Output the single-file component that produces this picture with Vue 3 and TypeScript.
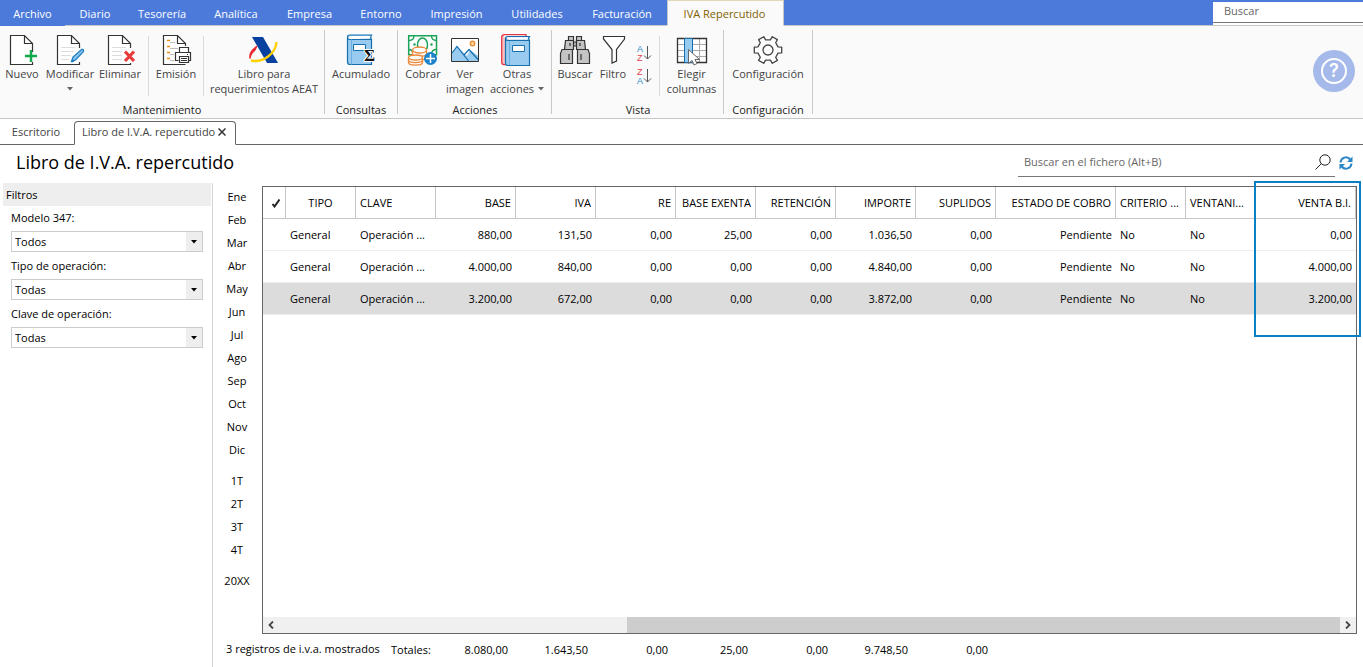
<script setup lang="ts">
import { ref } from 'vue'

interface Column {
  key: string
  label: string
  width: string
  align: 'left' | 'center' | 'right'
}

const menu = ['Archivo', 'Diario', 'Tesorería', 'Analítica', 'Empresa', 'Entorno', 'Impresión', 'Utilidades', 'Facturación', 'IVA Repercutido']
const activeMenu = ref('IVA Repercutido')

const filters = [
  { id: 'modelo', label: 'Modelo 347:', value: 'Todos' },
  { id: 'tipo', label: 'Tipo de operación:', value: 'Todas' },
  { id: 'clave', label: 'Clave de operación:', value: 'Todas' },
]

const periods = [
  ['Ene', 'Feb', 'Mar', 'Abr', 'May', 'Jun', 'Jul', 'Ago', 'Sep', 'Oct', 'Nov', 'Dic'],
  ['1T', '2T', '3T', '4T'],
  ['20XX'],
]

const columns: Column[] = [
  { key: 'tipo', label: 'TIPO', width: 'w70', align: 'center' },
  { key: 'clave', label: 'CLAVE', width: 'w80', align: 'left' },
  { key: 'base', label: 'BASE', width: 'w80', align: 'right' },
  { key: 'iva', label: 'IVA', width: 'w80', align: 'right' },
  { key: 're', label: 'RE', width: 'w80', align: 'right' },
  { key: 'exenta', label: 'BASE EXENTA', width: 'w80', align: 'right' },
  { key: 'retencion', label: 'RETENCIÓN', width: 'w80', align: 'right' },
  { key: 'importe', label: 'IMPORTE', width: 'w80', align: 'right' },
  { key: 'suplidos', label: 'SUPLIDOS', width: 'w80', align: 'right' },
  { key: 'estado', label: 'ESTADO DE COBRO', width: 'w120', align: 'right' },
  { key: 'criterio', label: 'CRITERIO ...', width: 'w70', align: 'left' },
  { key: 'ventanilla', label: 'VENTANI...', width: 'w70', align: 'left' },
  { key: 'venta', label: 'VENTA B.I.', width: 'rest', align: 'right' },
]

const rows: Record<string, string>[] = [
  { tipo: 'General', clave: 'Operación ...', base: '880,00', iva: '131,50', re: '0,00', exenta: '25,00', retencion: '0,00', importe: '1.036,50', suplidos: '0,00', estado: 'Pendiente', criterio: 'No', ventanilla: 'No', venta: '0,00' },
  { tipo: 'General', clave: 'Operación ...', base: '4.000,00', iva: '840,00', re: '0,00', exenta: '0,00', retencion: '0,00', importe: '4.840,00', suplidos: '0,00', estado: 'Pendiente', criterio: 'No', ventanilla: 'No', venta: '4.000,00' },
  { tipo: 'General', clave: 'Operación ...', base: '3.200,00', iva: '672,00', re: '0,00', exenta: '0,00', retencion: '0,00', importe: '3.872,00', suplidos: '0,00', estado: 'Pendiente', criterio: 'No', ventanilla: 'No', venta: '3.200,00' },
]
const selected = ref(2)

const totals = ['8.080,00', '1.643,50', '0,00', '25,00', '0,00', '9.748,50', '0,00']
</script>

<template>
  <div class="app">
    <header class="topbar">
      <nav class="menu">
        <button v-for="m in menu" :key="m" type="button" :class="{ active: m === activeMenu }" @click="activeMenu = m">{{ m }}</button>
      </nav>
      <div class="top-fill"></div>
      <div class="top-search"><input type="text" placeholder="Buscar" aria-label="Buscar" /></div>
    </header>

    <div class="ribbon">
      <section class="group">
        <div class="tools">
          <button type="button" class="tool w44">
            <svg viewBox="0 0 32 32"><path class="doc" d="M26.500 18V9.500L18.500 1.500H4.500V30.500H26.500V28M18.500 1.500V9.500H26" /><path d="M25 16v12M19 22h12" stroke="#12a84c" stroke-width="2.500" /></svg>
            <span>Nuevo</span>
          </button>
          <button type="button" class="tool w52">
            <svg viewBox="0 0 32 32"><path class="doc" d="M25.500 14V9.500L17.500 1.500H3.500V30.500H25.500V28M17.500 1.500V9.500H25" /><path d="M7 13.500h14M7 17.500h13M7 21.500h10M7 25.500h8" stroke="#ddd" /><path d="M17.500 27.500L19 23 27.500 15.500Q30 15 29.500 17.500L21.500 26Z" fill="#8cc4ec" stroke="#1e7fc4" stroke-width="1.300" /><path d="M17.500 27.500l2.500-1" stroke="#1e7fc4" stroke-width="2" /></svg>
            <span>Modificar</span>
            <svg class="caret" viewBox="0 0 6 4"><path d="M0 0h6L3 3.500z" fill="#666" /></svg>
          </button>
          <button type="button" class="tool w48">
            <svg viewBox="0 0 32 32"><path class="doc" d="M26.500 14V9.500L18.500 1.500H4.500V30.500H26.500V29M18.500 1.500V9.500H26" /><path d="M8 13.500h14M8 17.500h10M8 21.500h10M8 25.500h10" stroke="#ddd" /><path d="M21 17.500l9 9.500M30 17.500L21 27" stroke="#e83a3a" stroke-width="3.200" /></svg>
            <span>Eliminar</span>
          </button>
          <i class="sep spaced"></i>
          <button type="button" class="tool w54">
            <svg viewBox="0 0 32 32"><path class="doc" d="M25.500 12V9.500L17.500 1.500H3.500V30.500H25.500M17.500 1.500V9.500H25" /><path d="M7 6.500h3M7 12.500h3M7 18.500h3M7 24.500h3" stroke="#f08c0a" stroke-width="1.300" /><path d="M10 8.500h5M10 14.500h8M10 20.500h4M10 26.500h4" stroke="#bbb" /><g stroke="#333" stroke-width="1.200" fill="#fff"><path d="M19.500 19v-5.500h9V19M18.500 26.500h-3v-8h15v8h-3" /><path d="M19.500 22.500h9v6h-9zM21 24.500h6M21 26.500h6M27 20.500h1" /></g></svg>
            <span>Emisión</span>
          </button>
          <i class="sep"></i>
          <button type="button" class="tool w120">
            <svg viewBox="0 0 32 32"><path d="M9 12C3 16 1 20 2 24.500c1-4.500 3-6.500 5-8z" fill="#e8232a" stroke="#e8232a" /><path d="M4 3h11l15 26H19z" fill="#0840a0" /><path d="M28.500 8C28 19 15 29.500 3 26.500" stroke="#ffd000" stroke-width="2.400" /></svg>
            <span>Libro para</span><span>requerimientos AEAT</span>
          </button>
        </div>
        <h2>Mantenimiento</h2>
      </section>

      <section class="group">
        <div class="tools">
          <button type="button" class="tool w72">
            <svg viewBox="0 0 32 32"><path d="M2.500 3V28q0 2.500 2.500 2.500H26.500V5.500H5Q2.500 5.500 2.500 3q0-2 2.500-2H26.500L25.500 3.200l1 2.300" fill="#98cbef" stroke="#176fae" stroke-width="1.200" /><path d="M4 2h21.500l-1 2.500H5z" fill="#fff" /><path d="M6.500 5.500v25" stroke="#6aafe0" /><path d="M8.500 10.500h12v6h-12z" fill="#fff" stroke="#176fae" /><text x="19" y="27" class="sigma">Σ</text></svg>
            <span>Acumulado</span>
          </button>
        </div>
        <h2>Consultas</h2>
      </section>

      <section class="group inset">
        <div class="tools">
          <button type="button" class="tool w48">
            <svg viewBox="0 0 32 32"><path d="M1.700 1.700h27.800v19H1.700z" fill="#fff" stroke="#1ba35a" stroke-width="1.500" /><path d="M2 6.500q5 0 5-5M24.500 1.500q0 5 5 5M24.500 20.500q0-5 5-5M2 15.500q3 0 4 3" stroke="#1ba35a" stroke-width="1.400" /><ellipse cx="15.500" cy="11" rx="5" ry="7" stroke="#1ba35a" stroke-width="1.500" /><circle cx="7.500" cy="10.500" r="1.200" fill="#1ba35a" /><circle cx="24.500" cy="10.500" r="1.200" fill="#1ba35a" /><g fill="#fdfdfd" stroke="#ee8a3c" stroke-width="1.300"><path d="M5.500 16v7c0 4 14 4 14 0v-7" /><path d="M5.500 20c0 3 14 3 14 0" /><ellipse cx="12.500" cy="16" rx="7" ry="3" /><path d="M1.500 23.500v5c0 3.500 14 3.500 14 0v-5" /><path d="M1.500 26c0 3.500 14 3.500 14 0" /><ellipse cx="8.500" cy="23.500" rx="7" ry="2.500" /></g><circle cx="23.500" cy="24.500" r="6.500" fill="#1c83cb" /><path d="M23.500 20v9M19 24.500h9" stroke="#fff" stroke-width="1.500" /></svg>
            <span>Cobrar</span>
          </button>
          <button type="button" class="tool w36">
            <svg viewBox="0 0 32 32"><path d="M2.500 4.500h27v23h-27z" fill="#fff" /><path d="M3 18.500l5-6.500 10 10 3-6 8.500 6v5.500H3z" fill="#98cbef" /><path d="M3 19l5-6.500L19.500 27M14.500 21.500l5.500-6 9 10" stroke="#176fae" stroke-width="1.200" /><circle cx="23.500" cy="9.500" r="2.300" fill="#fbd09a" stroke="#ee8a2c" stroke-width="1.200" /><path d="M2.500 4.500h27v23h-27z" stroke="#333" /></svg>
            <span>Ver</span><span>imagen</span>
          </button>
          <button type="button" class="tool w68">
            <svg viewBox="0 0 32 32"><path d="M.7 3Q1 .7 3.500.7H25v30H3Q.7 30.500.7 28z" fill="#f7c1c1" stroke="#e63946" stroke-width="1.300" /><path d="M3 1.500h21v2H3z" fill="#fff" /><path d="M4.500 5V29q0 2.500 2.500 2.500H28.500V6.500H7Q4.500 6.500 4.500 4.500q0-1.700 2.500-2H28.500L27.500 4.500l1 2" fill="#98cbef" stroke="#176fae" stroke-width="1.200" /><path d="M6 3.300h21l-.5 2.200H7z" fill="#fff" /><path d="M8.500 7v24" stroke="#6aafe0" /><path d="M11.500 11.500h12v6h-12z" fill="#fff" stroke="#176fae" /></svg>
            <span>Otras</span>
            <span class="with-caret">acciones<svg class="caret" viewBox="0 0 6 4"><path d="M0 0h6L3 3.500z" fill="#666" /></svg></span>
          </button>
        </div>
        <h2>Acciones</h2>
      </section>

      <section class="group inset">
        <div class="tools">
          <button type="button" class="tool w44">
            <svg viewBox="0 0 32 32"><g fill="#c4c4c4" stroke="#333" stroke-width="1.200"><path d="M9.500 2.500h5v4h-5zM17.500 2.500h5v4h-5zM14.500 8h3v4h-3z" /><path d="M6.500 6.500h8v9h-9zM17.500 6.500h8l1 9h-9z" /><path d="M3 15.500h10.500v14h-12v-10zM18.500 15.500H29l1.500 4v10h-12z" /><path d="M11 9v3M21 9v3M10 20v6M22 20v6" /></g></svg>
            <span>Buscar</span>
          </button>
          <button type="button" class="tool w32">
            <svg viewBox="0 0 32 32"><path d="M6.500 2.500h21v2.500L19.500 15.500V27l-4.500 2V15.500L6.500 5z" fill="#fff" stroke="#333" stroke-width="1.200" /></svg>
            <span>Filtro</span>
          </button>
          <div class="sorts">
            <button type="button" aria-label="Orden ascendente"><svg viewBox="0 0 16 19"><text x="1" y="8" class="letter a">A</text><text x="1" y="17" class="letter z">Z</text><path d="M11.500 2v13M8 11.500l3.500 3.500L15 11.500" stroke="#555" /></svg></button>
            <button type="button" aria-label="Orden descendente"><svg viewBox="0 0 16 19"><text x="1" y="8" class="letter z">Z</text><text x="1" y="17" class="letter a">A</text><path d="M11.500 2v13M8 11.500l3.500 3.500L15 11.500" stroke="#555" /></svg></button>
          </div>
          <i class="sep"></i>
          <button type="button" class="tool w63">
            <svg viewBox="0 0 32 32"><path d="M1.500 4.500h29v24h-29z" fill="#fff" /><path d="M1 10.500h30M1 16.500h30M1 22.500h30M15.500 4v25M23.500 4v25" stroke="#aaa" /><path d="M1.500 4.500h29v24h-29z" stroke="#333" stroke-width="1.300" /><path d="M8.500 4.500h8v24h-8z" fill="#98cbef" stroke="#176fae" /><path d="M12.500 15.500v14l3.500-3 2 4.500 3-1.500-2-4h4.500z" fill="#fff" stroke="#666" /></svg>
            <span>Elegir</span><span>columnas</span>
          </button>
        </div>
        <h2>Vista</h2>
      </section>

      <section class="group">
        <div class="tools">
          <button type="button" class="tool w88">
            <svg viewBox="-16 -16 32 32"><path d="M10 -3.100L13.700 -2.900V2.900L10 3.100 7.700 7.200 9.400 10.400 4.300 13.300 2.400 10.200H-2.400L-4.300 13.300-9.400 10.400-7.700 7.200-10 3.100-13.700 2.900V-2.900L-10 -3.100-7.700 -7.200-9.400 -10.400-4.300 -13.300-2.400 -10.200H2.400L4.300 -13.300 9.400 -10.400 7.700 -7.200z" fill="#fff" stroke="#444" stroke-width="1.300" stroke-linejoin="round" /><circle r="5" stroke="#444" stroke-width="1.300" /></svg>
            <span>Configuración</span>
          </button>
        </div>
        <h2>Configuración</h2>
      </section>

      <button type="button" class="help" aria-label="Ayuda"><span>?</span></button>
    </div>

    <div class="tabs">
      <button type="button" class="tab">Escritorio</button>
      <div class="tab current">
        <button type="button">Libro de I.V.A. repercutido</button>
        <button type="button" class="close" aria-label="Cerrar"><svg viewBox="0 0 8 8"><path d="M.5.5l7 7M7.500.5l-7 7" stroke="#333" stroke-width="1.500" /></svg></button>
      </div>
      <div class="tabs-fill"></div>
    </div>

    <div class="titlebar">
      <h1>Libro de I.V.A. repercutido</h1>
      <div class="file-search">
        <input type="text" placeholder="Buscar en el fichero (Alt+B)" aria-label="Buscar en el fichero" />
        <svg viewBox="0 0 16 16"><circle cx="10" cy="6" r="5.200" stroke="#222" /><path d="M6.500 9.500L.5 15.500" stroke="#222" /></svg>
      </div>
      <button type="button" class="refresh" aria-label="Actualizar">
        <svg viewBox="0 0 14 14"><path d="M1.500 6.500C2 1.500 8-.5 11.300 3.500M12.500 7.500C12 12.500 6 14.500 2.700 10.500" stroke="#2a86c8" stroke-width="2" /><path d="M13.500.5V6H8zM.5 13.500V8H6z" fill="#2a86c8" /></svg>
      </button>
    </div>

    <main class="body">
      <aside class="filters">
        <h3>Filtros</h3>
        <div v-for="f in filters" :key="f.id" class="field">
          <label :for="f.id">{{ f.label }}</label>
          <div class="combo">
            <select :id="f.id"><option>{{ f.value }}</option></select>
            <span class="arrow"><svg viewBox="0 0 6 4"><path d="M0 0h6L3 3.500z" fill="#000" /></svg></span>
          </div>
        </div>
      </aside>

      <nav class="periods">
        <div v-for="(g, i) in periods" :key="i" class="period-group">
          <button v-for="p in g" :key="p" type="button">{{ p }}</button>
        </div>
      </nav>

      <section class="content">
        <div class="grid">
          <table>
            <colgroup>
              <col class="w23" />
              <col v-for="c in columns" :key="c.key" :class="c.width" />
            </colgroup>
            <thead>
              <tr>
                <th class="check"><svg viewBox="0 0 10 10"><path d="M1.500 6l2 2.500L8.500 1.500" stroke="#222" stroke-width="2" /></svg></th>
                <th v-for="c in columns" :key="c.key" :class="[c.align, { bare: c.key === 'ventanilla' }]">{{ c.label }}</th>
              </tr>
            </thead>
            <tbody>
              <tr v-for="(r, i) in rows" :key="i" :class="{ selected: i === selected }" @click="selected = i">
                <td></td>
                <td v-for="c in columns" :key="c.key" :class="c.align === 'right' ? 'right' : 'left'">{{ r[c.key] }}</td>
              </tr>
            </tbody>
          </table>
          <div class="scroll">
            <button type="button" aria-label="Desplazar a la izquierda"><svg viewBox="0 0 8 8"><path d="M6 .5L2.500 4 6 7.500" stroke="#444" stroke-width="1.800" /></svg></button>
            <div class="track"><div class="thumb"></div></div>
            <button type="button" aria-label="Desplazar a la derecha"><svg viewBox="0 0 8 8"><path d="M2 .5L5.500 4 2 7.500" stroke="#444" stroke-width="1.800" /></svg></button>
          </div>
          <div class="highlight"></div>
        </div>
        <footer class="totals">
          <span class="count">3 registros de i.v.a. mostrados</span>
          <span class="label">Totales:</span>
          <span v-for="(t, i) in totals" :key="i" class="total">{{ t }}</span>
        </footer>
      </section>
    </main>
  </div>
</template>

<style>
body {
  margin: 0;
  background: #fff;
}
</style>

<style scoped>
.app {
  display: flex;
  flex-direction: column;
  min-height: 100vh;
  overflow: hidden;
  font-family: "Open Sans", "Noto Sans", sans-serif;
  font-size: 11px;
  line-height: 15px;
  color: #000;
}
.app * { box-sizing: border-box; }
button, input, select {
  font: inherit;
  color: inherit;
  margin: 0;
  padding: 0;
  border: 0;
  background: none;
}
button { white-space: nowrap; }
h1, h2, h3 { margin: 0; font-weight: 400; }
svg { display: block; fill: none; flex: none; }

.topbar { display: flex; height: 26px; background: #4c7adb; }
.menu {
  display: grid;
  grid-template-columns: 65px 60px 74px 74px 73px 70px 81px 80px 90px 117px;
}
.menu button { color: #fff; padding-top: 2px; border-bottom: 1px solid #c6c6c6; }
.menu button:first-child { border-bottom-color: #4c7adb; }
.menu button.active {
  color: #806000;
  background: #fafafa;
  border: 1px solid #c6c6c6;
  border-top-color: #e0d8b8;
  border-bottom-color: #fafafa;
  padding: 0 2px 0 0;
}
.top-fill { flex: 1; border-bottom: 1px solid #c6c6c6; }
.top-search { width: 150px; padding-top: 2px; border-bottom: 1px solid #c6c6c6; }
.top-search input {
  display: block;
  width: 100%;
  height: 21px;
  padding: 0 11px 3px;
  background: #fff;
  border-bottom: 1px solid #777;
  box-shadow: 0 2px #fff;
}
input::placeholder { color: #666; opacity: 1; }

.ribbon {
  display: flex;
  height: 93px;
  background: #fafafa;
  border-bottom: 1px solid #c6c6c6;
  color: #444;
}
.group {
  display: flex;
  flex-direction: column;
  margin: 4px 0;
  border-right: 1px solid #c8c8c8;
}
.group.inset { padding-left: 1px; }
.tools { display: flex; flex: none; height: 72px; }
.group h2 { font-size: 11px; text-align: center; color: #222; }
.tool {
  display: flex;
  flex-direction: column;
  align-items: center;
  justify-content: flex-start;
  padding-top: 4px;
}
.tool > svg { width: 32px; height: 32px; }
.tool svg.caret, .caret { width: 6px; height: 4px; }
.tool > svg.caret { margin-top: 6px; }
.with-caret { display: flex; align-items: center; gap: 4px; }
.doc { stroke: #333; stroke-width: 1.2; fill: #fff; }
.sigma { font: bold 17px "Liberation Serif", serif; fill: #111; stroke: #fff; stroke-width: 2px; paint-order: stroke; }
.letter { font: 9px "Liberation Sans", sans-serif; }
.letter.a { fill: #2b86c6; }
.letter.z { fill: #e2424b; }
.sep { width: 1px; margin: 6px 0; background: #dadada; height: 60px; }
.sep.spaced { margin-left: 4px; }
.sorts { display: flex; flex-direction: column; width: 30px; padding: 14px 7px 0; gap: 4px; }
.sorts svg { width: 16px; height: 19px; }
.w32 { width: 32px; } .w36 { width: 36px; } .w44 { width: 44px; } .w48 { width: 48px; }
.w52 { width: 52px; } .w54 { width: 54px; } .w63 { width: 63px; } .w68 { width: 68px; }
.w72 { width: 72px; } .w88 { width: 88px; } .w120 { width: 120px; } .w23 { width: 23px; }
.w70 { width: 70px; } .w80 { width: 80px; }
.help {
  display: flex;
  align-items: center;
  justify-content: center;
  align-self: center;
  width: 42px;
  height: 42px;
  margin: 0 8px 2px auto;
  border-radius: 50%;
  background: #a5b9ea;
}
.help span {
  width: 26px;
  height: 26px;
  border: 2px solid #fff;
  border-radius: 50%;
  color: #fff;
  font-family: Inter, sans-serif;
  font-size: 18px;
  font-weight: 600;
  line-height: 22px;
}

.tabs { display: flex; height: 26px; padding-top: 2px; color: #444; }
.tab { width: 74px; border-bottom: 1px solid #666; }
.tabs > button.tab { padding: 0 2px 2px 0; }
.tab.current {
  display: flex;
  align-items: center;
  justify-content: space-between;
  width: 162px;
  padding: 0 9px 3px 7px;
  border: 1px solid #666;
  border-bottom-color: #fff;
  border-radius: 4px 4px 0 0;
}
.close svg { width: 8px; height: 8px; }
.tabs-fill { flex: 1; border-bottom: 1px solid #666; }

.titlebar { display: flex; height: 38px; padding: 0 10px 0 16px; }
h1 { flex: 1; font-size: 18px; line-height: 35px; }
.file-search {
  display: flex;
  align-items: center;
  width: 317px;
  height: 32px;
  padding: 2px 4px 0 6px;
  border-bottom: 1px solid #777;
}
.file-search input { flex: 1; min-width: 0; }
.file-search svg { width: 16px; height: 16px; }
.refresh { height: 36px; margin-left: 4px; }
.refresh svg { width: 14px; height: 14px; }

.body { display: flex; flex: 1; }
.filters { width: 213px; padding-left: 3px; border-right: 1px solid #d4d4d4; }
.filters h3 { margin-right: 1px; padding: 4px 3px; background: #eee; font-size: 11px; line-height: 15px; }
.field { height: 48px; padding: 4px 9px 0 8px; }
.field label { display: block; height: 21px; line-height: 16px; }
.combo { display: flex; height: 21px; border: 1px solid #ccc; }
.combo select { flex: 1; appearance: none; padding-left: 3px; border-radius: 0; }
.arrow { display: flex; align-items: center; justify-content: center; width: 16px; background: #eee; pointer-events: none; }
.arrow svg { width: 6px; height: 4px; }

.periods { display: flex; flex-direction: column; gap: 8px; width: 48px; margin-right: 1px; padding-top: 2px; }
.period-group { display: flex; flex-direction: column; }
.period-group button { height: 23px; }

.content { display: flex; flex: 1; flex-direction: column; min-width: 0; padding: 3px 6px 0 0; }
.grid { position: relative; display: flex; flex: 1; flex-direction: column; border: 1px solid #666; }
table { width: 100%; table-layout: fixed; border-collapse: separate; border-spacing: 0; }
th, td { padding: 0 4px; font-weight: 400; white-space: nowrap; overflow: hidden; height: 32px; }
th { border-right: 1px solid #c6c6c6; border-bottom: 1px solid #c6c6c6; }
th.bare { border-right-color: transparent; }
td { border-bottom: 1px solid #eee; }
.left { text-align: left; }
.center { text-align: center; }
.right { text-align: right; }
.check { padding: 0 4px 0 8px; }
.check svg { width: 10px; height: 10px; }
.selected td { background: #dcdcdc; }
.scroll { display: flex; height: 16px; margin-top: auto; background: #f0f0f0; }
.scroll button { display: flex; align-items: center; justify-content: center; width: 16px; }
.scroll svg { width: 8px; height: 8px; }
.track { flex: 1; }
.thumb { width: 67.2%; height: 100%; margin-left: auto; background: #cdcdcd; }
.highlight {
  position: absolute;
  top: -6px;
  right: -5px;
  width: 107px;
  height: 156px;
  border: 2px solid #0a80c4;
  pointer-events: none;
}
.totals { display: flex; height: 33px; margin-left: -36px; padding-top: 8px; white-space: nowrap; }
.count { width: 165px; line-height: 13px; }
.label { width: 37px; }
.total { width: 80px; text-align: right; }
</style>
